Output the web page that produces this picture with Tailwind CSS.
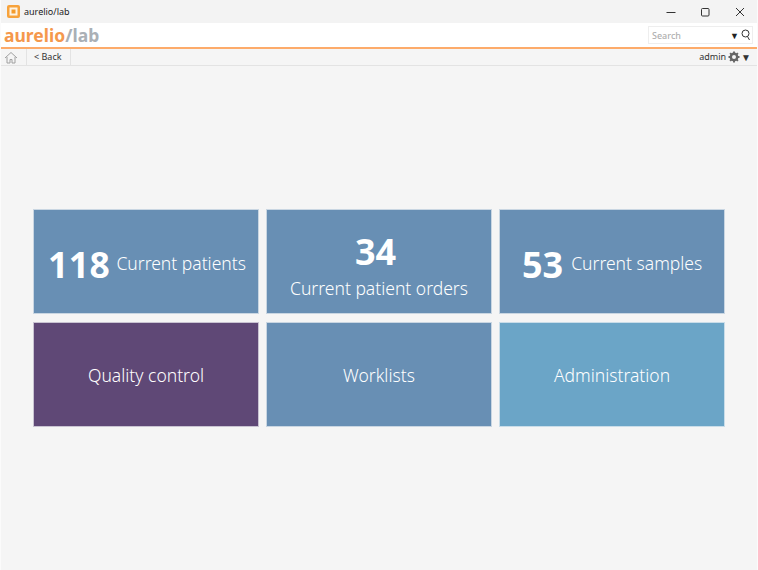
<!DOCTYPE html>
<html lang="en">
<head>
  <meta charset="UTF-8" />
  <title>aurelio/lab</title>
  <script src="https://cdn.jsdelivr.net/npm/@tailwindcss/browser@4"></script>
</head>
<body class="bg-[#f5f5f5] h-[570px] w-[758px] overflow-hidden flex flex-col border-x border-[#fbfbfb] font-['Noto_Sans','Open_Sans',sans-serif] text-[#333]">

  <!-- title bar -->
  <div class="h-[23px] flex items-center pl-[6px] bg-[#f3f3f3]">
    <svg width="13" height="13" viewBox="0 0 13 13"><rect width="13" height="13" rx="2" fill="#f7a23b"/><rect x="2.500" y="2.500" width="8" height="8" fill="#fdf3e4"/><rect x="4.500" y="4.500" width="4" height="4" fill="#f49b2c"/></svg>
    <span class="ml-[4px] text-[9px] text-[#222]">aurelio/lab</span>
    <div class="ml-auto flex items-center">
      <svg class="mr-[24px]" width="10" height="10" viewBox="0 0 10 10"><path d="M0.500 5.500h9" stroke="#333" fill="none"/></svg>
      <svg class="mr-[25px]" width="10" height="10" viewBox="0 0 10 10"><rect x="1.500" y="1.500" width="7.500" height="7.500" rx="1" stroke="#333" fill="none"/></svg>
      <svg class="mr-[12px]" width="10" height="10" viewBox="0 0 10 10"><path d="M1 1l8 8M9 1l-8 8" stroke="#333" fill="none"/></svg>
    </div>
  </div>

  <!-- logo bar -->
  <div class="h-[24px] bg-white border-b-2 border-[#fdab6a] box-content flex items-center pl-[3px] pr-[4px]">
    <span class="text-[17.5px] font-bold leading-none pt-[2px]"><span class="text-[#f5984c]">aurelio</span><span class="text-[#aab0b6]">/lab</span></span>
    <div class="ml-auto w-[105px] h-[18px] border border-[#eeeeee] flex items-center pl-[3px] pr-[1px]">
      <span class="text-[9px] font-medium text-[#b0b0b0] pt-[1px]">Search</span>
      <span class="ml-auto text-[9px] leading-none text-[#222]">▼</span>
      <svg class="ml-[2px] mb-[1px]" width="10" height="12" viewBox="0 0 10 12"><circle cx="4.500" cy="4.500" r="3.500" stroke="#333" fill="none"/><path d="M6.500 7.500l2 3.500" stroke="#333" fill="none"/></svg>
    </div>
  </div>

  <!-- nav bar -->
  <div class="h-[16px] box-content border-b border-[#e3e3e3] flex items-center text-[9px] text-[#333]">
    <div class="w-[26px] h-full border-r border-[#e3e3e3] flex items-center pl-[3px]">
      <svg width="14" height="13" viewBox="0 0 14 13"><path d="M1 7l6-5.500L13 7M3 6v6h3V8.500h2V12h3V6" stroke="#a0a0a0" fill="none"/></svg>
    </div>
    <div class="w-[44px] h-full border-r border-[#e3e3e3] flex items-center pl-[7px]">&lt; Back</div>
    <div class="ml-auto flex items-center pr-[6px]">
      <span class="mr-[2px]">admin</span>
      <svg width="12" height="12" viewBox="0 0 12 12"><circle cx="6" cy="6" r="3.200" stroke="#666" stroke-width="2.400" fill="none"/><path d="M6 .5v2M6 9.500v2M.5 6h2M9.500 6h2M2.100 2.100l1.400 1.400M8.500 8.500l1.400 1.400M9.900 2.100L8.500 3.500M3.500 8.500l-1.400 1.400" stroke="#666" stroke-width="1.900"/></svg>
      <span class="ml-[1px] text-[10px] leading-none">▼</span>
    </div>
  </div>

  <!-- tiles -->
  <div class="flex-1 flex items-start pl-[32px] pt-[143px]">
    <div class="grid grid-cols-[226px_226px_226px] grid-rows-[105px_105px] gap-x-[7px] gap-y-[7.500px] text-white">
      <div class="bg-[#688fb4] border border-[#c9d6e2] flex items-center pl-[14px] pt-[4px]">
        <span class="text-[35.500px] font-bold leading-none tracking-[0.5px] pt-[2px]">118</span>
        <span class="text-[17.500px] font-light ml-[6px]">Current patients</span>
      </div>
      <div class="bg-[#688fb4] border border-[#c9d6e2] flex flex-col items-center justify-center pt-[13px]">
        <span class="text-[36px] font-bold leading-none -ml-[7px]">34</span>
        <span class="text-[17.500px] font-light mt-[5px]">Current patient orders</span>
      </div>
      <div class="bg-[#688fb4] border border-[#c9d6e2] flex items-center pl-[22px] pt-[4px]">
        <span class="text-[36px] font-bold leading-none pt-[2px]">53</span>
        <span class="text-[17.500px] font-light ml-[8px]">Current samples</span>
      </div>
      <div class="bg-[#5f4876] border border-[#c9c3d2] flex items-center justify-center pt-[2px] text-[17.500px] font-light">Quality control</div>
      <div class="bg-[#688fb4] border border-[#c9d6e2] flex items-center justify-center pt-[2px] text-[17.500px] font-light">Worklists</div>
      <div class="bg-[#6ba5c7] border border-[#c9dde9] flex items-center justify-center pt-[2px] text-[17.500px] font-light">Administration</div>
    </div>
  </div>
</body>
</html>
